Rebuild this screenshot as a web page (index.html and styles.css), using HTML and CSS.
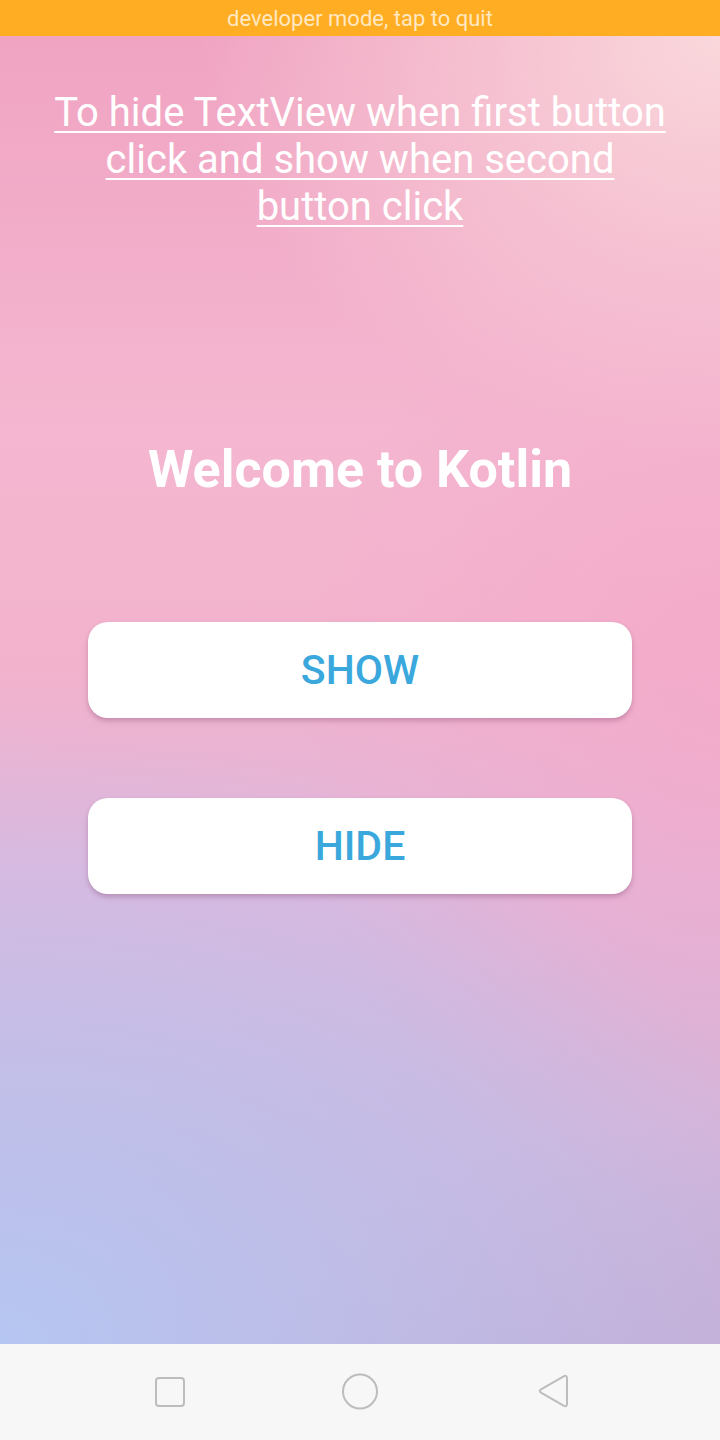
FILE: index.html
```html
<!DOCTYPE html>
<html>
<head>
<meta charset="utf-8">
<link rel="stylesheet" href="styles.css">
</head>
<body>
<div class="screen">
  <div class="status">developer mode, tap to quit</div>
  <main class="content">
    <h1 class="title">To hide TextView when first button<br>click and show when second<br>button click</h1>
    <p class="welcome">Welcome to Kotlin</p>
    <div class="buttons">
      <button class="btn">SHOW</button>
      <button class="btn">HIDE</button>
    </div>
  </main>
  <nav class="navbar">
    <svg class="nav-icon" width="40" height="40" viewBox="0 0 40 40"><rect x="6" y="6" width="28" height="28" rx="3" fill="none" stroke="#bdbdbd" stroke-width="2"/></svg>
    <svg class="nav-icon" width="40" height="40" viewBox="0 0 40 40"><circle cx="20" cy="19.5" r="17" fill="none" stroke="#bdbdbd" stroke-width="2"/></svg>
    <svg class="nav-icon" width="40" height="40" viewBox="0 0 40 40"><path d="M11 17.4 L33.6 4.4 Q37 2.6 37 6.4 L37 31.6 Q37 35.4 33.6 33.6 L11 20.6 Q8.4 19 11 17.4 Z" fill="none" stroke="#bdbdbd" stroke-width="2" stroke-linejoin="round"/></svg>
  </nav>
</div>
</body>
</html>
```
FILE: styles.css
```css
html, body {
  margin: 0;
  padding: 0;
}
body {
  width: 720px;
  height: 1440px;
  overflow: hidden;
  font-family: Roboto, "Liberation Sans", sans-serif;
}
.screen {
  width: 720px;
  height: 1440px;
  display: flex;
  flex-direction: column;
}
.status {
  height: 36px;
  flex: 0 0 36px;
  background: #ffad22;
  color: #ffe8c2;
  font-size: 22px;
  line-height: 38px;
  text-align: center;
}
.content {
  flex: 1;
  display: flex;
  flex-direction: column;
  align-items: center;
  background-color: #f3b4ce;
  background-image:
    radial-gradient(ellipse 520px 420px at 100% 0%, rgba(250, 216, 220, 1), rgba(250, 216, 220, 0)),
    radial-gradient(ellipse 820px 620px at 0% 100%, rgba(182, 198, 242, 1), rgba(182, 198, 242, 0)),
    radial-gradient(ellipse 420px 500px at 100% 52%, rgba(244, 170, 202, 0.8), rgba(244, 170, 202, 0)),
    linear-gradient(to bottom, #f0a4c2 0%, #f4b6d0 30%, #f2b2cc 48%, #dfb6dc 64%, #d2b6dc 80%, #c6aed6 100%);
}
.title {
  margin: 53px 0 0;
  color: #ffffff;
  font-size: 40px;
  font-weight: 400;
  line-height: 47px;
  text-align: center;
  text-decoration: underline;
  text-decoration-thickness: 2px;
  text-underline-offset: 5px;
}
.welcome {
  margin: 208px 0 0;
  color: #ffffff;
  font-size: 52px;
  font-weight: 700;
  line-height: 64px;
}
.buttons {
  margin-top: 120px;
  display: flex;
  flex-direction: column;
  gap: 80px;
}
.btn {
  width: 544px;
  height: 96px;
  border: none;
  border-radius: 20px;
  background: #ffffff;
  color: #3aa8dc;
  font-family: Roboto, "Liberation Sans", sans-serif;
  font-size: 41px;
  font-weight: 500;
  padding: 0;
  box-shadow: 0 3px 5px rgba(130, 70, 110, 0.35);
}
.navbar {
  flex: 0 0 96px;
  height: 96px;
  background: #f7f7f7;
  display: flex;
  align-items: center;
  justify-content: space-between;
  padding: 0 150px;
}
.nav-icon {
  display: block;
}
```
